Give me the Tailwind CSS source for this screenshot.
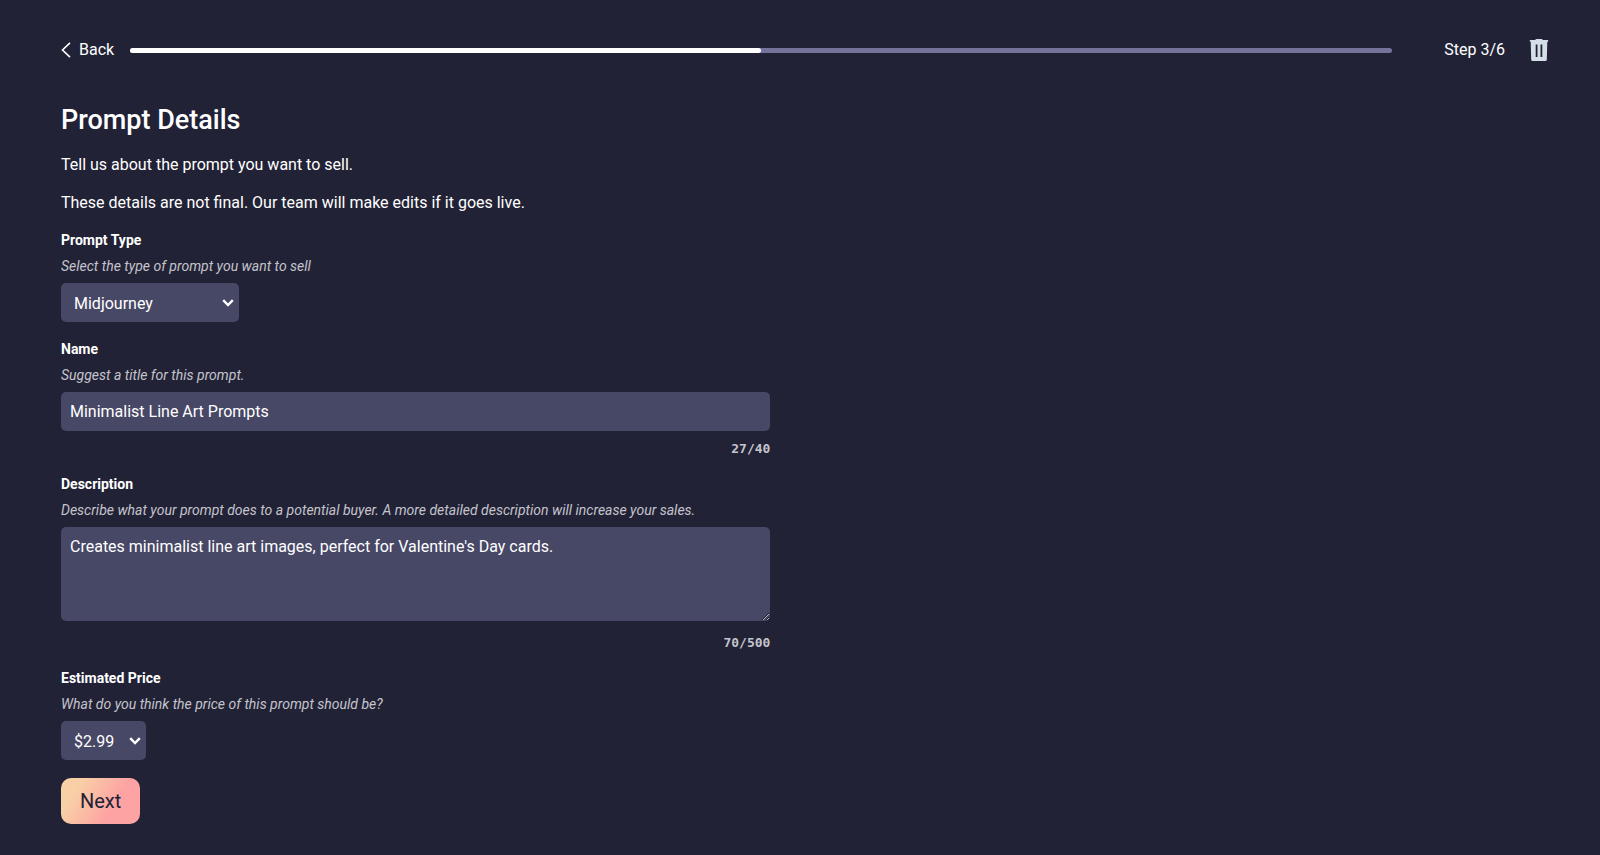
<!DOCTYPE html>
<html lang="en">
<head>
    <meta charset="UTF-8">
    <meta name="viewport" content="width=device-width, initial-scale=1.0">
    <title>Prompt Details</title>
    <script src="https://cdn.jsdelivr.net/npm/@tailwindcss/browser@4"></script>
</head>
<body class="min-h-screen bg-[#222236] font-['Roboto','Liberation_Sans',sans-serif] text-base font-normal text-white">

<!-- Progress header -->
<header class="flex items-center pt-9 pr-[51px] pl-[61px]">
    <a href="#" class="flex items-center gap-2">
        <svg class="h-4 w-[10px]" viewBox="0 0 10 16" fill="none" stroke="currentColor" stroke-width="1.6" aria-hidden="true">
            <path d="M9 0.8 1.5 8 9 15.2"/>
        </svg>
        <span class="leading-7">Back</span>
    </a>
    <div class="ml-4 h-[5px] flex-1 rounded-full bg-[#73739c]" role="progressbar" aria-label="Progress" aria-valuemin="0" aria-valuemax="6" aria-valuenow="3">
        <div class="h-full w-1/2 rounded-full bg-white"></div>
    </div>
    <span class="ml-[52px] leading-7">Step 3/6</span>
    <button type="button" class="ml-6 text-[#d5dfe8]" aria-label="Delete">
        <svg class="h-[22px] w-5" viewBox="0 0 20 22" fill="currentColor" aria-hidden="true">
            <path fill-rule="evenodd" d="M7.500 0h5q1 0 1.300 1H18.500q.8 0 .8 .9t-.8 .9H18.300L17.800 20.500q0 1.500-1.500 1.500H3.700q-1.500 0-1.500-1.500L1.700 2.800H1.500q-.8 0-.8-.9T1.500 1H6.200q.3-1 1.300-1zM6.700 5.500v12.500h1.800v-12.500zM11.500 5.500v12.500h1.800v-12.500z"/>
        </svg>
    </button>
</header>

<main class="px-[61px] pt-9 pb-7">
    <h1 class="text-[27px] leading-10 font-medium">Prompt Details</h1>
    <p class="mt-[13px] leading-6">Tell us about the prompt you want to sell.</p>
    <p class="mt-[14px] leading-6">These details are not final. Our team will make edits if it goes live.</p>

    <form class="mt-3 flex w-[48%] flex-col items-start gap-[14px]">
        <!-- Type -->
        <div>
            <label for="type" class="block text-sm leading-[26px] font-bold">Prompt Type</label>
            <p class="text-sm leading-[26px] text-[#c4c4cc] italic">Select the type of prompt you want to sell</p>
            <div class="mt-1 grid w-[178px] items-center">
                <select id="type" class="col-start-1 row-start-1 h-[39px] w-full appearance-none rounded-[5px] bg-[#474766] px-[13px] pt-0.5">
                    <option>Midjourney</option>
                    <option>DALL·E</option>
                    <option>GPT</option>
                    <option>Stable Diffusion</option>
                </select>
                <svg class="pointer-events-none col-start-1 row-start-1 mr-[5px] h-2 w-3 justify-self-end" viewBox="0 0 12 8" fill="none" stroke="currentColor" stroke-width="2.400" aria-hidden="true">
                    <path d="M1.200 1.200 6 6 10.800 1.200"/>
                </svg>
            </div>
        </div>

        <!-- Name -->
        <div class="w-full">
            <label for="name" class="block text-sm leading-[26px] font-bold">Name</label>
            <p class="text-sm leading-[26px] text-[#c4c4cc] italic">Suggest a title for this prompt.</p>
            <input id="name" type="text" maxlength="40" value="Minimalist Line Art Prompts" class="mt-1 block h-[39px] w-full rounded-[5px] bg-[#474766] px-[9px]">
            <p class="mt-[10px] text-right font-['DejaVu_Sans_Mono',monospace] text-[13px] leading-4 font-bold text-[#c4c4cc]">27/40</p>
        </div>

        <!-- Description -->
        <div class="w-full">
            <label for="description" class="block text-sm leading-[26px] font-bold">Description</label>
            <p class="text-sm leading-[26px] text-[#c4c4cc] italic">Describe what your prompt does to a potential buyer. A more detailed description will increase your sales.</p>
            <textarea id="description" maxlength="500" class="mt-1 block h-[94px] w-full rounded-[5px] bg-[#474766] px-[9px] py-2">Creates minimalist line art images, perfect for Valentine's Day cards.</textarea>
            <p class="mt-[14px] text-right font-['DejaVu_Sans_Mono',monospace] text-[13px] leading-4 font-bold text-[#c4c4cc]">70/500</p>
        </div>

        <!-- Price -->
        <div>
            <label for="price" class="block text-sm leading-[26px] font-bold">Estimated Price</label>
            <p class="text-sm leading-[26px] text-[#c4c4cc] italic">What do you think the price of this prompt should be?</p>
            <div class="mt-1 grid w-[85px] items-center">
                <select id="price" class="col-start-1 row-start-1 h-[39px] w-full appearance-none rounded-[5px] bg-[#474766] px-[13px] pt-0.5">
                    <option>$2.99</option>
                    <option>$3.99</option>
                    <option>$4.99</option>
                </select>
                <svg class="pointer-events-none col-start-1 row-start-1 mr-[5px] h-2 w-3 justify-self-end" viewBox="0 0 12 8" fill="none" stroke="currentColor" stroke-width="2.400" aria-hidden="true">
                    <path d="M1.200 1.200 6 6 10.800 1.200"/>
                </svg>
            </div>
        </div>

        <button type="submit" class="mt-1 h-[46px] rounded-[10px] bg-linear-120 from-[#f8d0a6] from-20% to-[#fda3a3] to-65% px-[19px] text-xl text-[#222236]">Next</button>
    </form>
</main>
</body>
</html>
